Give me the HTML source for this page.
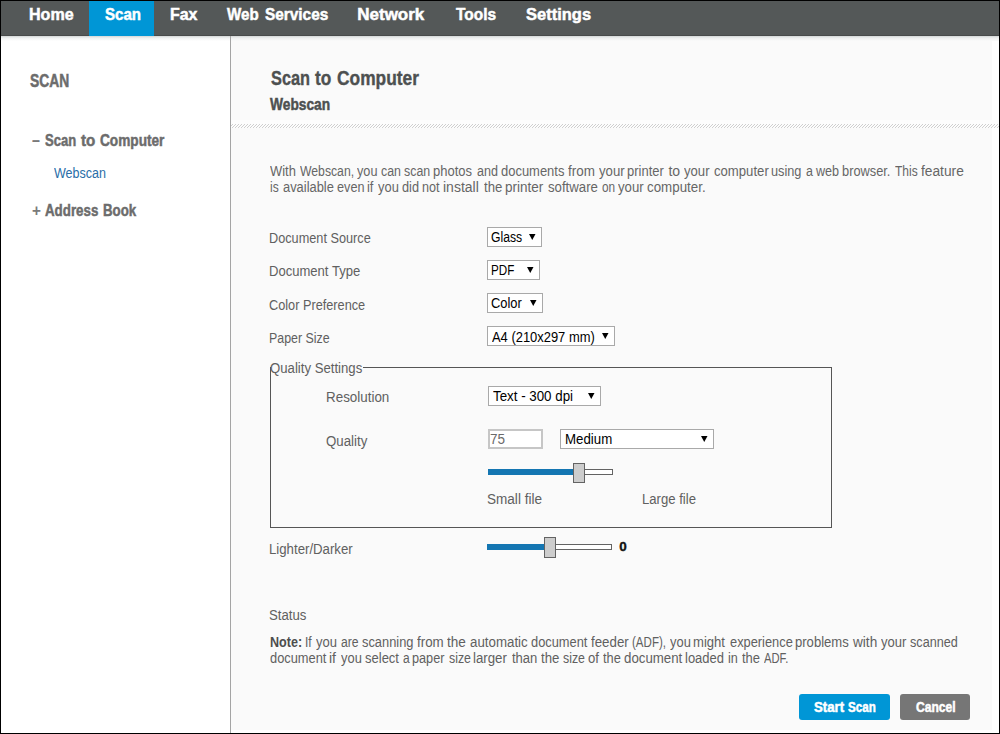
<!DOCTYPE html>
<html lang="en"><head><meta charset="utf-8"><title>Scan to Computer - Webscan</title>
<style>
html,body{margin:0;padding:0;}
body{width:1000px;height:734px;overflow:hidden;background:#000;font-family:"Liberation Sans",sans-serif;position:relative;}
#page{position:absolute;left:1px;top:1px;width:998px;height:732px;background:#fff;overflow:hidden;}
#wrap{position:absolute;left:-1px;top:-1px;width:1000px;height:734px;}
#nav{position:absolute;left:0;top:0;width:1000px;height:36px;background:#545858;border-bottom:1px solid #484b4b;box-sizing:border-box;}
#tab{position:absolute;left:89px;top:0;width:65px;height:36px;background:#0096d6;}
#shadow{position:absolute;left:231px;top:36px;width:768px;height:5px;background:linear-gradient(#d2d6d6,#eef0f0 40%,#fafafa);}
#side{position:absolute;left:0;top:36px;width:230px;height:698px;background:#fff;}
#sideshadow{position:absolute;left:0;top:36px;width:230px;height:5px;background:linear-gradient(#d2d6d6,#f0f2f2 40%,#fff);}
#sideb{position:absolute;left:230px;top:36px;width:1px;height:698px;background:#a4a4a4;}
#main{position:absolute;left:231px;top:36px;width:761px;height:694px;background:#fafafa;}
#hatchbg{position:absolute;left:231px;top:120px;width:768px;height:8px;background:#fdfdfd;}
#hatch{position:absolute;left:231px;top:124px;width:768px;height:4px;background:repeating-linear-gradient(135deg,#fdfdfd 0,#fdfdfd 1.2px,#cfcfcf 1.2px,#cfcfcf 2.12px);}
nav,aside,main,form,p,ul,li,h1,.row,.fieldset{display:contents;margin:0;}
h1,h2,h3,label,a{margin:0;font-weight:normal;text-decoration:none;}
.t{position:absolute;white-space:pre;transform-origin:0 0;line-height:normal;display:inline-block;}
.sel{position:absolute;box-sizing:border-box;border:1px solid #a9a9a9;background:#fff;}
.inp{position:absolute;box-sizing:border-box;border:2px solid #c6c6c6;background:#fff;}
.ar{position:absolute;}
#fs{position:absolute;left:270px;top:367px;width:562px;height:161px;box-sizing:border-box;border:1px solid #555;}
#legbg{position:absolute;left:271px;top:362px;width:92px;height:12px;background:#fafafa;}
.trk{position:absolute;box-sizing:border-box;border:1px solid #636363;background:#fff;}
.fill{position:absolute;background:#1476b2;}
.thumb{position:absolute;box-sizing:border-box;border:1px solid #636363;background:#cdcdcd;}
.btn{position:absolute;border-radius:3px;}
b{color:#4e4e4e;}
</style></head><body>
<div id="page"><div id="wrap">

<nav><div id="nav"></div><div id="tab"></div>
<a><span class="t" id="n1" style="left:28.95px;top:5.30px;font-size:17px;color:#fff;font-weight:700;-webkit-text-stroke:0.5px #fff;transform:scaleX(0.9457);">Home</span></a> <a><span class="t" id="n2" style="left:104.50px;top:5.30px;font-size:17px;color:#fff;font-weight:700;-webkit-text-stroke:0.5px #fff;transform:scaleX(0.8875);">Scan</span></a> <a><span class="t" id="n3" style="left:169.81px;top:5.30px;font-size:17px;color:#fff;font-weight:700;-webkit-text-stroke:0.5px #fff;transform:scaleX(0.9375);">Fax</span></a> <a><span class="t" id="n4" style="left:227.00px;top:5.30px;font-size:17px;color:#fff;font-weight:700;-webkit-text-stroke:0.5px #fff;transform:scaleX(0.8889);">Web</span> <span class="t" id="n4b" style="left:264.70px;top:5.30px;font-size:17px;color:#fff;font-weight:700;-webkit-text-stroke:0.5px #fff;transform:scaleX(0.9043);">Services</span></a> <a><span class="t" id="n5" style="left:357.25px;top:5.30px;font-size:17px;color:#fff;font-weight:700;-webkit-text-stroke:0.5px #fff;">Network</span></a> <a><span class="t" id="n6" style="left:455.50px;top:5.30px;font-size:17px;color:#fff;font-weight:700;-webkit-text-stroke:0.5px #fff;transform:scaleX(0.9091);">Tools</span></a> <a><span class="t" id="n7" style="left:526.25px;top:5.30px;font-size:17px;color:#fff;font-weight:700;-webkit-text-stroke:0.5px #fff;transform:scaleX(0.9701);">Settings</span></a>
</nav>
<aside><div id="side"></div><div id="sideshadow"></div><div id="sideb"></div>
<h3 class="t" id="s1" style="left:30.00px;top:71.00px;font-size:17.5px;color:#6c6c6c;font-weight:700;-webkit-text-stroke:0.5px #6c6c6c;transform:scaleX(0.7908);">SCAN</h3>
<ul><li><span class="t" id="s2m" style="left:32.00px;top:129.50px;font-size:18px;color:#7a7a7a;font-weight:700;transform:scaleX(0.7900);">–</span> <a><span class="t" id="s2" style="left:45.20px;top:131.25px;font-size:16.5px;color:#6c6c6c;font-weight:700;-webkit-text-stroke:0.5px #6c6c6c;transform:scaleX(0.7897);">Scan</span> <span class="t" id="s2b" style="left:80.80px;top:131.25px;font-size:16.5px;color:#6c6c6c;font-weight:700;-webkit-text-stroke:0.5px #6c6c6c;transform:scaleX(0.9188);">to</span> <span class="t" id="s2c" style="left:99.50px;top:131.25px;font-size:16.5px;color:#6c6c6c;font-weight:700;-webkit-text-stroke:0.5px #6c6c6c;transform:scaleX(0.8269);">Computer</span></a><ul><li><a class="t" id="s3" style="left:54.00px;top:165.00px;font-size:14px;color:#2a6ea8;transform:scaleX(0.8947);">Webscan</a></li></ul></li>
<li><span class="t" id="s4m" style="left:31.70px;top:202.00px;font-size:16px;color:#7a7a7a;font-weight:700;transform:scaleX(0.9556);">+</span> <a><span class="t" id="s4" style="left:45.20px;top:200.75px;font-size:16.5px;color:#6c6c6c;font-weight:700;-webkit-text-stroke:0.5px #6c6c6c;transform:scaleX(0.8076);">Address</span> <span class="t" id="s4b" style="left:102.89px;top:200.75px;font-size:16.5px;color:#6c6c6c;font-weight:700;-webkit-text-stroke:0.5px #6c6c6c;transform:scaleX(0.8061);">Book</span></a></li></ul>
</aside>
<main><div id="main"></div><div id="shadow"></div><div id="hatchbg"></div><div id="hatch"></div>
<h1><span class="t" id="h1" style="left:270.60px;top:66.80px;font-size:20px;color:#4d5050;font-weight:700;-webkit-text-stroke:0.35px #4d5050;transform:scaleX(0.8170);">Scan</span> <span class="t" id="h1b" style="left:314.60px;top:66.80px;font-size:20px;color:#4d5050;font-weight:700;-webkit-text-stroke:0.35px #4d5050;transform:scaleX(0.8632);">to</span> <span class="t" id="h1c" style="left:337.00px;top:66.80px;font-size:20px;color:#4d5050;font-weight:700;-webkit-text-stroke:0.35px #4d5050;transform:scaleX(0.8684);">Computer</span></h1>
<h2 class="t" id="h2" style="left:270.00px;top:95.00px;font-size:16.5px;color:#4d5050;font-weight:700;-webkit-text-stroke:0.5px #4d5050;transform:scaleX(0.8333);">Webscan</h2>
<p><span class="t" id="p1_0" style="left:270.00px;top:163.25px;font-size:14px;color:#666;transform:scaleX(0.9250);">With </span>
<span class="t" id="p1_1" style="left:299.50px;top:163.25px;font-size:14px;color:#666;transform:scaleX(0.8727);">Webscan, </span>
<span class="t" id="p1_2" style="left:357.00px;top:163.25px;font-size:14px;color:#666;transform:scaleX(0.9067);">you </span>
<span class="t" id="p1_3" style="left:381.00px;top:163.25px;font-size:14px;color:#666;transform:scaleX(0.8841);">can </span>
<span class="t" id="p1_4" style="left:404.40px;top:163.25px;font-size:14px;color:#666;transform:scaleX(0.8844);">scan </span>
<span class="t" id="p1_5" style="left:433.07px;top:163.25px;font-size:14px;color:#666;transform:scaleX(0.9273);">photos </span>
<span class="t" id="p1_6" style="left:476.60px;top:163.25px;font-size:14px;color:#666;transform:scaleX(0.8954);">and </span>
<span class="t" id="p1_7" style="left:501.00px;top:163.25px;font-size:14px;color:#666;transform:scaleX(0.9257);">documents </span>
<span class="t" id="p1_8" style="left:568.00px;top:163.25px;font-size:14px;color:#666;transform:scaleX(0.9595);">from </span>
<span class="t" id="p1_9" style="left:598.60px;top:163.25px;font-size:14px;color:#666;transform:scaleX(0.9446);">your </span>
<span class="t" id="p1_10" style="left:627.07px;top:163.25px;font-size:14px;color:#666;transform:scaleX(0.9271);">printer </span>
<span class="t" id="p1_11" style="left:668.40px;top:163.25px;font-size:14px;color:#666;">to </span>
<span class="t" id="p1_12" style="left:684.40px;top:163.25px;font-size:14px;color:#666;transform:scaleX(0.9382);">your </span>
<span class="t" id="p1_13" style="left:713.60px;top:163.25px;font-size:14px;color:#666;transform:scaleX(0.9382);">computer </span>
<span class="t" id="p1_14" style="left:771.09px;top:163.25px;font-size:14px;color:#666;transform:scaleX(0.9101);">using </span>
<span class="t" id="p1_15" style="left:806.00px;top:163.25px;font-size:14px;color:#666;transform:scaleX(0.8898);">a </span>
<span class="t" id="p1_16" style="left:816.40px;top:163.25px;font-size:14px;color:#666;transform:scaleX(0.8993);">web </span>
<span class="t" id="p1_17" style="left:842.08px;top:163.25px;font-size:14px;color:#666;transform:scaleX(0.9153);">browser. </span>
<span class="t" id="p1_18" style="left:895.00px;top:163.25px;font-size:14px;color:#666;transform:scaleX(0.8568);">This </span>
<span class="t" id="p1_19" style="left:921.00px;top:163.25px;font-size:14px;color:#666;transform:scaleX(0.9814);">feature</span><br><span class="t" id="p2_0" style="left:269.64px;top:179.00px;font-size:14px;color:#666;transform:scaleX(0.8571);">is </span>
<span class="t" id="p2_1" style="left:282.50px;top:179.00px;font-size:14px;color:#666;transform:scaleX(0.9213);">available </span>
<span class="t" id="p2_2" style="left:337.00px;top:179.00px;font-size:14px;color:#666;transform:scaleX(0.9051);">even </span>
<span class="t" id="p2_3" style="left:367.08px;top:179.00px;font-size:14px;color:#666;transform:scaleX(0.9182);">if </span>
<span class="t" id="p2_4" style="left:378.00px;top:179.00px;font-size:14px;color:#666;transform:scaleX(0.9218);">you </span>
<span class="t" id="p2_5" style="left:402.40px;top:179.00px;font-size:14px;color:#666;transform:scaleX(0.9124);">did </span>
<span class="t" id="p2_6" style="left:422.10px;top:179.00px;font-size:14px;color:#666;transform:scaleX(0.8990);">not </span>
<span class="t" id="p2_7" style="left:443.00px;top:179.00px;font-size:14px;color:#666;">install </span>
<span class="t" id="p2_8" style="left:484.00px;top:179.00px;font-size:14px;color:#666;transform:scaleX(0.9418);">the </span>
<span class="t" id="p2_9" style="left:505.04px;top:179.00px;font-size:14px;color:#666;transform:scaleX(0.9638);">printer </span>
<span class="t" id="p2_10" style="left:548.00px;top:179.00px;font-size:14px;color:#666;transform:scaleX(0.9435);">software </span>
<span class="t" id="p2_11" style="left:601.60px;top:179.00px;font-size:14px;color:#666;transform:scaleX(0.8424);">on </span>
<span class="t" id="p2_12" style="left:618.00px;top:179.00px;font-size:14px;color:#666;transform:scaleX(0.9446);">your </span>
<span class="t" id="p2_13" style="left:647.40px;top:179.00px;font-size:14px;color:#666;transform:scaleX(0.9533);">computer.</span></p>
<form>
<div class="row"><label class="t" id="l1" style="left:269.09px;top:230.00px;font-size:14px;color:#606060;transform:scaleX(0.9077);">Document Source</label><div class="sel" style="left:487px;top:227px;width:55px;height:20px"></div><svg class="ar" style="left:529.25px;top:234px" width="6.5" height="6" viewBox="0 0 6.5 6"><path d="M0 0H6.5L3.25 6Z" fill="#000"/></svg><span class="t" id="c1" style="left:491.13px;top:229.00px;font-size:14px;color:#000;transform:scaleX(0.8714);">Glass</span></div>
<div class="row"><label class="t" id="l2" style="left:269.07px;top:263.25px;font-size:14px;color:#606060;transform:scaleX(0.9323);">Document Type</label><div class="sel" style="left:487px;top:260px;width:53px;height:20px"></div><svg class="ar" style="left:527.25px;top:267px" width="6.5" height="6" viewBox="0 0 6.5 6"><path d="M0 0H6.5L3.25 6Z" fill="#000"/></svg><span class="t" id="c2" style="left:491.17px;top:262.00px;font-size:14px;color:#000;transform:scaleX(0.8333);">PDF</span></div>
<div class="row"><label class="t" id="l3" style="left:269.09px;top:297.00px;font-size:14px;color:#606060;transform:scaleX(0.9087);">Color Preference</label><div class="sel" style="left:487px;top:293px;width:56px;height:20px"></div><svg class="ar" style="left:530.25px;top:300px" width="6.5" height="6" viewBox="0 0 6.5 6"><path d="M0 0H6.5L3.25 6Z" fill="#000"/></svg><span class="t" id="c3" style="left:491.08px;top:295.00px;font-size:14px;color:#000;transform:scaleX(0.9219);">Color</span></div>
<div class="row"><label class="t" id="l4" style="left:269.12px;top:330.25px;font-size:14px;color:#606060;transform:scaleX(0.8843);">Paper Size</label><div class="sel" style="left:487px;top:326px;width:128px;height:20px"></div><svg class="ar" style="left:602.25px;top:333px" width="6.5" height="6" viewBox="0 0 6.5 6"><path d="M0 0H6.5L3.25 6Z" fill="#000"/></svg><span class="t" id="c4" style="left:492.00px;top:328.50px;font-size:14px;color:#000;transform:scaleX(0.9234);">A4 (210x297 mm)</span></div>
<div class="fieldset"><div id="fs"></div><div id="legbg"></div><label class="t" id="l5" style="left:270.31px;top:360.00px;font-size:14px;color:#606060;transform:scaleX(0.9407);">Quality Settings</label>
<div class="row"><label class="t" id="l6" style="left:325.79px;top:388.50px;font-size:14px;color:#606060;transform:scaleX(0.9570);">Resolution</label><div class="sel" style="left:488px;top:386px;width:113px;height:20px"></div><svg class="ar" style="left:588.25px;top:393px" width="6.5" height="6" viewBox="0 0 6.5 6"><path d="M0 0H6.5L3.25 6Z" fill="#000"/></svg><span class="t" id="c5" style="left:493.00px;top:387.50px;font-size:14px;color:#000;transform:scaleX(0.9518);">Text - 300 dpi</span></div>
<div class="row"><label class="t" id="l7" style="left:325.80px;top:432.75px;font-size:14px;color:#606060;transform:scaleX(0.9477);">Quality</label><div class="inp" style="left:488px;top:429px;width:55px;height:20px"></div><span class="t" id="c6" style="left:489.64px;top:430.75px;font-size:14px;color:#6a6a6a;transform:scaleX(0.9643);">75</span><div class="sel" style="left:560px;top:429px;width:154px;height:20px"></div><svg class="ar" style="left:701.25px;top:436px" width="6.5" height="6" viewBox="0 0 6.5 6"><path d="M0 0H6.5L3.25 6Z" fill="#000"/></svg><span class="t" id="c7" style="left:564.80px;top:431.25px;font-size:14px;color:#000;transform:scaleX(0.9479);">Medium</span></div>
<div class="row"><div class="trk" style="left:488px;top:469px;width:125px;height:6px"></div><div class="fill" style="left:488px;top:469px;width:87px;height:6px"></div><div class="thumb" style="left:573px;top:463px;width:12px;height:20px"></div><label class="t" id="l8" style="left:487.03px;top:490.75px;font-size:14px;color:#606060;transform:scaleX(0.9682);">Small file</label><label class="t" id="l9" style="left:641.56px;top:490.75px;font-size:14px;color:#606060;transform:scaleX(0.9375);">Large file</label></div>
</div>
<div class="row"><label class="t" id="l10" style="left:269.06px;top:540.75px;font-size:14px;color:#606060;transform:scaleX(0.9432);">Lighter/Darker</label><div class="trk" style="left:487px;top:544px;width:125px;height:6px"></div><div class="fill" style="left:487px;top:544px;width:59px;height:6px"></div><div class="thumb" style="left:544px;top:537px;width:12px;height:21px"></div><label class="t" id="l11" style="left:619.25px;top:539.25px;font-size:13.5px;color:#111;font-weight:700;-webkit-text-stroke:0.35px #111;">0</label></div>
<div class="row"><label class="t" id="l12" style="left:269.06px;top:606.50px;font-size:14px;color:#606060;transform:scaleX(0.9423);">Status</label></div>
<p><span class="t" id="q1_0" style="left:269.50px;top:633.75px;font-size:14px;color:#606060;transform:scaleX(0.8974);"><b>Note:</b> </span>
<span class="t" id="q1_1" style="left:305.14px;top:633.75px;font-size:14px;color:#606060;transform:scaleX(0.8568);">If </span>
<span class="t" id="q1_2" style="left:316.00px;top:633.75px;font-size:14px;color:#606060;transform:scaleX(0.9294);">you </span>
<span class="t" id="q1_3" style="left:340.60px;top:633.75px;font-size:14px;color:#606060;transform:scaleX(0.8705);">are </span>
<span class="t" id="q1_4" style="left:361.60px;top:633.75px;font-size:14px;color:#606060;transform:scaleX(0.9176);">scanning </span>
<span class="t" id="q1_5" style="left:416.60px;top:633.75px;font-size:14px;color:#606060;transform:scaleX(0.9533);">from </span>
<span class="t" id="q1_6" style="left:447.00px;top:633.75px;font-size:14px;color:#606060;transform:scaleX(0.9675);">the </span>
<span class="t" id="q1_7" style="left:469.60px;top:633.75px;font-size:14px;color:#606060;transform:scaleX(0.9506);">automatic </span>
<span class="t" id="q1_8" style="left:531.00px;top:633.75px;font-size:14px;color:#606060;transform:scaleX(0.9178);">document </span>
<span class="t" id="q1_9" style="left:591.00px;top:633.75px;font-size:14px;color:#606060;transform:scaleX(0.9497);">feeder </span>
<span class="t" id="q1_10" style="left:631.58px;top:633.75px;font-size:14px;color:#606060;transform:scaleX(0.8247);">(ADF), </span>
<span class="t" id="q1_11" style="left:669.60px;top:633.75px;font-size:14px;color:#606060;transform:scaleX(0.9218);">you </span>
<span class="t" id="q1_12" style="left:693.07px;top:633.75px;font-size:14px;color:#606060;transform:scaleX(0.9338);">might </span>
<span class="t" id="q1_13" style="left:729.60px;top:633.75px;font-size:14px;color:#606060;transform:scaleX(0.9172);">experience </span>
<span class="t" id="q1_14" style="left:795.07px;top:633.75px;font-size:14px;color:#606060;transform:scaleX(0.9338);">problems </span>
<span class="t" id="q1_15" style="left:853.40px;top:633.75px;font-size:14px;color:#606060;transform:scaleX(0.9723);">with </span>
<span class="t" id="q1_16" style="left:881.40px;top:633.75px;font-size:14px;color:#606060;transform:scaleX(0.9317);">your </span>
<span class="t" id="q1_17" style="left:910.40px;top:633.75px;font-size:14px;color:#606060;transform:scaleX(0.9038);">scanned</span><br><span class="t" id="q2_0" style="left:270.00px;top:650.25px;font-size:14px;color:#606060;transform:scaleX(0.9178);">document </span>
<span class="t" id="q2_1" style="left:329.00px;top:650.25px;font-size:14px;color:#606060;">if </span>
<span class="t" id="q2_2" style="left:341.00px;top:650.25px;font-size:14px;color:#606060;transform:scaleX(0.9218);">you </span>
<span class="t" id="q2_3" style="left:365.40px;top:650.25px;font-size:14px;color:#606060;transform:scaleX(0.9291);">select </span>
<span class="t" id="q2_4" style="left:403.00px;top:650.25px;font-size:14px;color:#606060;transform:scaleX(0.8556);">a </span>
<span class="t" id="q2_5" style="left:412.09px;top:650.25px;font-size:14px;color:#606060;transform:scaleX(0.9067);">paper </span>
<span class="t" id="q2_6" style="left:449.00px;top:650.25px;font-size:14px;color:#606060;transform:scaleX(0.8820);">size </span>
<span class="t" id="q2_7" style="left:473.45px;top:650.25px;font-size:14px;color:#606060;transform:scaleX(0.9474);">larger </span>
<span class="t" id="q2_8" style="left:512.00px;top:650.25px;font-size:14px;color:#606060;transform:scaleX(0.9313);">than </span>
<span class="t" id="q2_9" style="left:541.00px;top:650.25px;font-size:14px;color:#606060;transform:scaleX(0.9418);">the </span>
<span class="t" id="q2_10" style="left:563.00px;top:650.25px;font-size:14px;color:#606060;transform:scaleX(0.8820);">size </span>
<span class="t" id="q2_11" style="left:588.40px;top:650.25px;font-size:14px;color:#606060;transform:scaleX(0.9372);">of </span>
<span class="t" id="q2_12" style="left:603.00px;top:650.25px;font-size:14px;color:#606060;transform:scaleX(0.9161);">the </span>
<span class="t" id="q2_13" style="left:624.40px;top:650.25px;font-size:14px;color:#606060;transform:scaleX(0.9484);">document </span>
<span class="t" id="q2_14" style="left:685.47px;top:650.25px;font-size:14px;color:#606060;transform:scaleX(0.9273);">loaded </span>
<span class="t" id="q2_15" style="left:728.09px;top:650.25px;font-size:14px;color:#606060;transform:scaleX(0.9056);">in </span>
<span class="t" id="q2_16" style="left:742.40px;top:650.25px;font-size:14px;color:#606060;transform:scaleX(0.9247);">the </span>
<span class="t" id="q2_17" style="left:764.00px;top:650.25px;font-size:14px;color:#606060;transform:scaleX(0.8000);">ADF.</span></p>
<div class="btn" style="left:799px;top:694px;width:91px;height:26px;background:#0096d6"></div><span role="button"><span class="t" id="b1" style="left:813.80px;top:699.00px;font-size:14.5px;color:#fff;font-weight:700;-webkit-text-stroke:0.5px #fff;transform:scaleX(0.9091);">Start</span> <span class="t" id="b1b" style="left:848.00px;top:699.00px;font-size:14.5px;color:#fff;font-weight:700;-webkit-text-stroke:0.5px #fff;transform:scaleX(0.8000);">Scan</span></span>
<div class="btn" style="left:900px;top:694px;width:70px;height:26px;background:#767676"></div><span role="button"><span class="t" id="b2" style="left:915.50px;top:699.00px;font-size:14.5px;color:#fff;font-weight:700;-webkit-text-stroke:0.5px #fff;transform:scaleX(0.8319);">Cancel</span></span>
</form></main>
</div></div></body></html>
